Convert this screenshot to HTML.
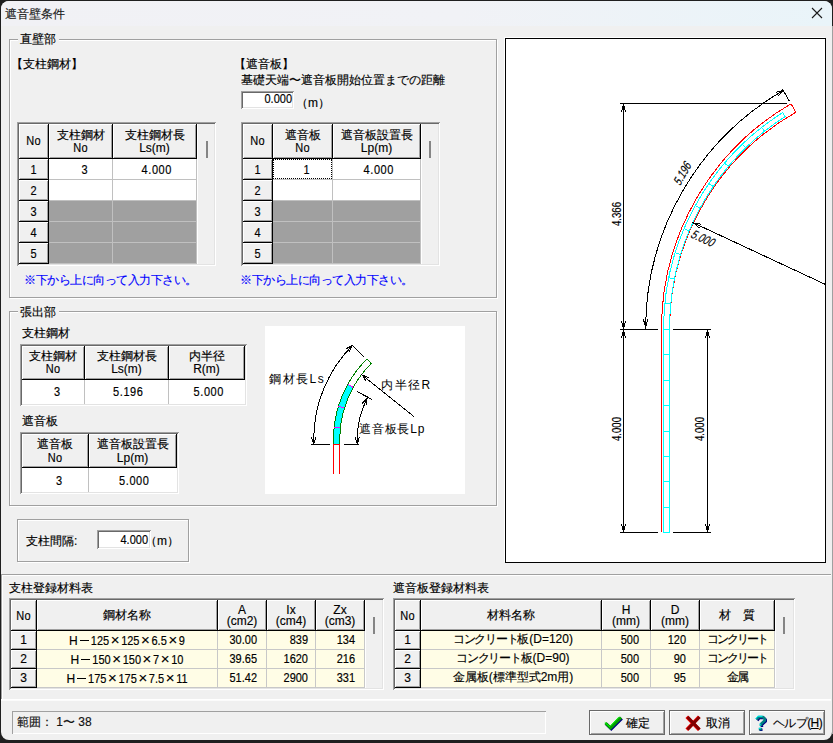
<!DOCTYPE html>
<html><head><meta charset="utf-8"><style>
html,body{margin:0;padding:0}
body{width:833px;height:743px;overflow:hidden;background:#1f1f1f;position:relative;font-family:"Liberation Sans",sans-serif;font-size:12px;line-height:12px;color:#000;-webkit-text-stroke:0.15px currentColor}
.a{position:absolute;box-sizing:content-box}
.t{white-space:nowrap}
.n{display:inline-block;font-size:11px;transform:scaleY(1.16);transform-origin:0 88%}
.x{display:inline-block;width:12px;text-align:center;font-size:15px;line-height:12px;vertical-align:baseline;position:relative;top:0px}
.m{letter-spacing:0.57px;text-indent:0.57px}
.dash{display:inline-block;width:13px;height:12px;position:relative;vertical-align:top}
.dash:after{content:'';position:absolute;left:2px;top:6px;width:9px;height:1px;background:#000}
.hc{background:#f0f0f0;border-right:1px solid #000;border-bottom:1px solid #000;box-shadow:inset 1px 1px 0 #fff, inset -1px -1px 0 #a0a0a0}
</style></head><body>
<div class="a" style="left:1px;top:1px;width:831px;height:739px;border-radius:8px;background:#f0f0f0;overflow:hidden">
<div class="a" style="left:0;top:0;width:831px;height:25px;background:linear-gradient(to right,#f1f1f5 0%,#f1f2f6 55%,#e9f4f9 100%)"></div>
</div>
<div class="a t" style="left:5px;top:8px;color:#1a1a1a">遮音壁条件</div>
<svg class="a" style="left:810px;top:6px" width="14" height="14"><path d="M2 2 L12 12 M12 2 L2 12" stroke="#1a1a1a" stroke-width="1.1"/></svg>
<div class="a" style="left:10px;top:40px;width:486px;height:257px;border:1px solid #fff"></div>
<div class="a" style="left:9px;top:39px;width:486px;height:257px;border:1px solid #a0a0a0"></div>
<div class="a" style="left:18px;top:32px;width:41px;height:14px;background:#f0f0f0"></div>
<div class="a t" style="left:20px;top:33px;">直壁部</div>
<div class="a t" style="left:11px;top:58px;">【支柱鋼材】</div>
<div class="a t" style="left:234px;top:58px;">【遮音板】</div>
<div class="a t" style="left:241px;top:74px;">基礎天端〜遮音板開始位置までの距離</div>
<div class="a" style="left:241px;top:91px;width:53px;height:18px;background:#fff;box-shadow:inset 1px 1px 0 #a0a0a0, inset -1px -1px 0 #fff, inset 2px 2px 0 #696969, inset -2px -2px 0 #e3e3e3"></div>
<div class="a t" style="left:-8px;top:93px;width:300px;text-align:right;"><span class="n">0.000</span></div>
<div class="a t" style="left:296px;top:97px;">（m）</div>
<div class="a" style="left:17px;top:122px;width:199px;height:144px;background:#f0f0f0;box-shadow:inset 1px 1px 0 #a0a0a0, inset -1px -1px 0 #fff, inset 2px 2px 0 #696969, inset -2px -2px 0 #e3e3e3"></div>
<div class="a hc" style="left:19px;top:124px;width:29px;height:34px"></div>
<div class="a hc" style="left:49px;top:124px;width:63px;height:34px"></div>
<div class="a hc" style="left:113px;top:124px;width:83px;height:34px"></div>
<div class="a hc" style="left:19px;top:159px;width:29px;height:20px"></div>
<div class="a" style="left:49px;top:159px;width:63px;height:20px;background:#fff;border-right:1px solid #c0c0c0;border-bottom:1px solid #c0c0c0"></div>
<div class="a" style="left:113px;top:159px;width:83px;height:20px;background:#fff;border-right:1px solid #c0c0c0;border-bottom:1px solid #c0c0c0"></div>
<div class="a hc" style="left:19px;top:180px;width:29px;height:20px"></div>
<div class="a" style="left:49px;top:180px;width:63px;height:20px;background:#fff;border-right:1px solid #c0c0c0;border-bottom:1px solid #c0c0c0"></div>
<div class="a" style="left:113px;top:180px;width:83px;height:20px;background:#fff;border-right:1px solid #c0c0c0;border-bottom:1px solid #c0c0c0"></div>
<div class="a hc" style="left:19px;top:201px;width:29px;height:20px"></div>
<div class="a" style="left:49px;top:201px;width:63px;height:20px;background:#a0a0a0;border-right:1px solid #c0c0c0;border-bottom:1px solid #c0c0c0"></div>
<div class="a" style="left:113px;top:201px;width:83px;height:20px;background:#a0a0a0;border-right:1px solid #c0c0c0;border-bottom:1px solid #c0c0c0"></div>
<div class="a hc" style="left:19px;top:222px;width:29px;height:20px"></div>
<div class="a" style="left:49px;top:222px;width:63px;height:20px;background:#a0a0a0;border-right:1px solid #c0c0c0;border-bottom:1px solid #c0c0c0"></div>
<div class="a" style="left:113px;top:222px;width:83px;height:20px;background:#a0a0a0;border-right:1px solid #c0c0c0;border-bottom:1px solid #c0c0c0"></div>
<div class="a hc" style="left:19px;top:243px;width:29px;height:20px"></div>
<div class="a" style="left:49px;top:243px;width:63px;height:20px;background:#a0a0a0;border-right:1px solid #c0c0c0;border-bottom:1px solid #c0c0c0"></div>
<div class="a" style="left:113px;top:243px;width:83px;height:20px;background:#a0a0a0;border-right:1px solid #c0c0c0;border-bottom:1px solid #c0c0c0"></div>
<div class="a" style="left:197px;top:124px;width:17px;height:140px;background:#f0f0f0;border-left:1px solid #fff;box-sizing:border-box"></div>
<div class="a" style="left:206px;top:141px;width:2px;height:17px;background:#858585"></div>
<div class="a" style="left:241px;top:122px;width:199px;height:144px;background:#f0f0f0;box-shadow:inset 1px 1px 0 #a0a0a0, inset -1px -1px 0 #fff, inset 2px 2px 0 #696969, inset -2px -2px 0 #e3e3e3"></div>
<div class="a hc" style="left:243px;top:124px;width:29px;height:34px"></div>
<div class="a hc" style="left:273px;top:124px;width:59px;height:34px"></div>
<div class="a hc" style="left:333px;top:124px;width:87px;height:34px"></div>
<div class="a hc" style="left:243px;top:159px;width:29px;height:20px"></div>
<div class="a" style="left:273px;top:159px;width:59px;height:20px;background:#fff;border-right:1px solid #c0c0c0;border-bottom:1px solid #c0c0c0"></div>
<div class="a" style="left:333px;top:159px;width:87px;height:20px;background:#fff;border-right:1px solid #c0c0c0;border-bottom:1px solid #c0c0c0"></div>
<div class="a hc" style="left:243px;top:180px;width:29px;height:20px"></div>
<div class="a" style="left:273px;top:180px;width:59px;height:20px;background:#fff;border-right:1px solid #c0c0c0;border-bottom:1px solid #c0c0c0"></div>
<div class="a" style="left:333px;top:180px;width:87px;height:20px;background:#fff;border-right:1px solid #c0c0c0;border-bottom:1px solid #c0c0c0"></div>
<div class="a hc" style="left:243px;top:201px;width:29px;height:20px"></div>
<div class="a" style="left:273px;top:201px;width:59px;height:20px;background:#a0a0a0;border-right:1px solid #c0c0c0;border-bottom:1px solid #c0c0c0"></div>
<div class="a" style="left:333px;top:201px;width:87px;height:20px;background:#a0a0a0;border-right:1px solid #c0c0c0;border-bottom:1px solid #c0c0c0"></div>
<div class="a hc" style="left:243px;top:222px;width:29px;height:20px"></div>
<div class="a" style="left:273px;top:222px;width:59px;height:20px;background:#a0a0a0;border-right:1px solid #c0c0c0;border-bottom:1px solid #c0c0c0"></div>
<div class="a" style="left:333px;top:222px;width:87px;height:20px;background:#a0a0a0;border-right:1px solid #c0c0c0;border-bottom:1px solid #c0c0c0"></div>
<div class="a hc" style="left:243px;top:243px;width:29px;height:20px"></div>
<div class="a" style="left:273px;top:243px;width:59px;height:20px;background:#a0a0a0;border-right:1px solid #c0c0c0;border-bottom:1px solid #c0c0c0"></div>
<div class="a" style="left:333px;top:243px;width:87px;height:20px;background:#a0a0a0;border-right:1px solid #c0c0c0;border-bottom:1px solid #c0c0c0"></div>
<div class="a" style="left:421px;top:124px;width:17px;height:140px;background:#f0f0f0;border-left:1px solid #fff;box-sizing:border-box"></div>
<div class="a" style="left:429px;top:141px;width:2px;height:17px;background:#858585"></div>
<div class="a t" style="left:19px;top:135px;width:29px;text-align:center;"><span class="n" style="letter-spacing:0.3px">No</span></div>
<div class="a t" style="left:49px;top:129px;width:63px;text-align:center;">支柱鋼材</div>
<div class="a t" style="left:49px;top:142px;width:63px;text-align:center;"><span class="n" style="letter-spacing:0.3px">No</span></div>
<div class="a t" style="left:113px;top:129px;width:83px;text-align:center;">支柱鋼材長</div>
<div class="a t" style="left:113px;top:142px;width:83px;text-align:center;">Ls(m)</div>
<div class="a t" style="left:19px;top:164px;width:29px;text-align:center;"><span class="n m">1</span></div>
<div class="a t" style="left:19px;top:185px;width:29px;text-align:center;"><span class="n m">2</span></div>
<div class="a t" style="left:19px;top:206px;width:29px;text-align:center;"><span class="n m">3</span></div>
<div class="a t" style="left:19px;top:227px;width:29px;text-align:center;"><span class="n m">4</span></div>
<div class="a t" style="left:19px;top:248px;width:29px;text-align:center;"><span class="n m">5</span></div>
<div class="a t" style="left:49px;top:164px;width:71px;text-align:center;"><span class="n m">3</span></div>
<div class="a t" style="left:113px;top:164px;width:87px;text-align:center;"><span class="n m">4.000</span></div>
<div class="a t" style="left:243px;top:135px;width:29px;text-align:center;"><span class="n" style="letter-spacing:0.3px">No</span></div>
<div class="a t" style="left:273px;top:129px;width:59px;text-align:center;">遮音板</div>
<div class="a t" style="left:273px;top:142px;width:59px;text-align:center;"><span class="n" style="letter-spacing:0.3px">No</span></div>
<div class="a t" style="left:333px;top:129px;width:87px;text-align:center;">遮音板設置長</div>
<div class="a t" style="left:333px;top:142px;width:87px;text-align:center;">Lp(m)</div>
<div class="a t" style="left:243px;top:164px;width:29px;text-align:center;"><span class="n m">1</span></div>
<div class="a t" style="left:243px;top:185px;width:29px;text-align:center;"><span class="n m">2</span></div>
<div class="a t" style="left:243px;top:206px;width:29px;text-align:center;"><span class="n m">3</span></div>
<div class="a t" style="left:243px;top:227px;width:29px;text-align:center;"><span class="n m">4</span></div>
<div class="a t" style="left:243px;top:248px;width:29px;text-align:center;"><span class="n m">5</span></div>
<div class="a t" style="left:273px;top:164px;width:67px;text-align:center;"><span class="n m">1</span></div>
<div class="a t" style="left:333px;top:164px;width:91px;text-align:center;"><span class="n m">4.000</span></div>
<div class="a" style="left:273px;top:159px;width:57px;height:18px;border:1px dotted #000"></div>
<div class="a t" style="left:24px;top:274px;color:#0000ff;letter-spacing:-0.5px">※下から上に向って入力下さい。</div>
<div class="a t" style="left:240px;top:274px;color:#0000ff;letter-spacing:-0.5px">※下から上に向って入力下さい。</div>
<div class="a" style="left:10px;top:312px;width:486px;height:193px;border:1px solid #fff"></div>
<div class="a" style="left:9px;top:311px;width:486px;height:193px;border:1px solid #a0a0a0"></div>
<div class="a" style="left:18px;top:304px;width:41px;height:14px;background:#f0f0f0"></div>
<div class="a t" style="left:20px;top:306px;">張出部</div>
<div class="a t" style="left:22px;top:327px;">支柱鋼材</div>
<div class="a" style="left:20px;top:344px;width:227px;height:62px;background:#f0f0f0;box-shadow:inset 1px 1px 0 #a0a0a0, inset -1px -1px 0 #fff, inset 2px 2px 0 #696969, inset -2px -2px 0 #e3e3e3"></div>
<div class="a hc" style="left:22px;top:346px;width:62px;height:33px"></div>
<div class="a hc" style="left:85px;top:346px;width:83px;height:33px"></div>
<div class="a hc" style="left:169px;top:346px;width:75px;height:33px"></div>
<div class="a" style="left:22px;top:380px;width:62px;height:24px;background:#fff;border-right:1px solid #c0c0c0;"></div>
<div class="a" style="left:85px;top:380px;width:83px;height:24px;background:#fff;border-right:1px solid #c0c0c0;"></div>
<div class="a" style="left:169px;top:380px;width:76px;height:24px;background:#fff;"></div>
<div class="a t" style="left:22px;top:350px;width:62px;text-align:center;">支柱鋼材</div>
<div class="a t" style="left:22px;top:363px;width:62px;text-align:center;"><span class="n" style="letter-spacing:0.3px">No</span></div>
<div class="a t" style="left:85px;top:350px;width:83px;text-align:center;">支柱鋼材長</div>
<div class="a t" style="left:85px;top:363px;width:83px;text-align:center;">Ls(m)</div>
<div class="a t" style="left:169px;top:350px;width:75px;text-align:center;">内半径</div>
<div class="a t" style="left:169px;top:363px;width:75px;text-align:center;">R(m)</div>
<div class="a t" style="left:22px;top:386px;width:70px;text-align:center;"><span class="n m">3</span></div>
<div class="a t" style="left:85px;top:386px;width:86px;text-align:center;"><span class="n m">5.196</span></div>
<div class="a t" style="left:169px;top:386px;width:79px;text-align:center;"><span class="n m">5.000</span></div>
<div class="a t" style="left:22px;top:415px;">遮音板</div>
<div class="a" style="left:20px;top:432px;width:159px;height:62px;background:#f0f0f0;box-shadow:inset 1px 1px 0 #a0a0a0, inset -1px -1px 0 #fff, inset 2px 2px 0 #696969, inset -2px -2px 0 #e3e3e3"></div>
<div class="a hc" style="left:22px;top:434px;width:66px;height:33px"></div>
<div class="a hc" style="left:89px;top:434px;width:87px;height:33px"></div>
<div class="a" style="left:22px;top:468px;width:66px;height:24px;background:#fff;border-right:1px solid #c0c0c0;"></div>
<div class="a" style="left:89px;top:468px;width:88px;height:24px;background:#fff;"></div>
<div class="a t" style="left:22px;top:438px;width:66px;text-align:center;">遮音板</div>
<div class="a t" style="left:22px;top:452px;width:66px;text-align:center;"><span class="n" style="letter-spacing:0.3px">No</span></div>
<div class="a t" style="left:89px;top:438px;width:87px;text-align:center;">遮音板設置長</div>
<div class="a t" style="left:89px;top:452px;width:87px;text-align:center;">Lp(m)</div>
<div class="a t" style="left:22px;top:475px;width:74px;text-align:center;"><span class="n m">3</span></div>
<div class="a t" style="left:89px;top:475px;width:90px;text-align:center;"><span class="n m">5.000</span></div>
<div class="a" style="left:265px;top:326px;width:200px;height:168px;background:#fff"></div>
<svg class="a" style="left:265px;top:326px" width="200" height="168" viewBox="265 326 200 168" shape-rendering="crispEdges"><path d="M333.5 444 L333.50 439.60 A114 114 0 0 1 347.79 384.33 L353.22 387.34 A107.8 107.8 0 0 0 339.70 439.60 L339.4 444 Z" fill="#00ffff" stroke="#008000" stroke-width="1"/><path d="M347.79 384.33 A114 114 0 0 1 367.03 358.85 L371.41 363.24 A107.8 107.8 0 0 0 353.22 387.34" fill="none" stroke="#008000" stroke-width="1"/><path d="M334.19 427.09 L340.35 427.77" stroke="#ff00ff" stroke-width="1" fill="none" /><path d="M338.48 406.27 L344.41 408.08" stroke="#ff00ff" stroke-width="1" fill="none" /><path d="M347.79 384.33 L353.22 387.34" stroke="#ff00ff" stroke-width="1" fill="none" /><path d="M333.5 444 L333.5 474 M339.5 444 L339.5 474 M333.5 444.5 L339.5 444.5" stroke="#ff0000" stroke-width="1" fill="none"/><path d="M311 444.5 L330 444.5 M344 444.5 L359 444.5" stroke="#000" stroke-width="1" fill="none"/><path d="M313.70 444 L313.70 439.60 A133.8 133.8 0 0 1 352.40 345.49" stroke="#000" stroke-width="1" fill="none"/><path d="M311.54 437.34 L313.70 444.00 L315.86 437.34" stroke="#000" stroke-width="1" fill="none"/><path d="M349.25 351.74 L352.40 345.49 L346.17 348.70" stroke="#000" stroke-width="1" fill="none"/><path d="M352.40 345.49 L364.34 357.30" stroke="#000" stroke-width="1" fill="none" /><path d="M357.20 444 L357.20 439.60 A90.3 90.3 0 0 1 367.11 398.46" stroke="#000" stroke-width="1" fill="none"/><path d="M355.04 437.34 L357.20 444.00 L359.36 437.34" stroke="#000" stroke-width="1" fill="none"/><path d="M366.01 405.38 L367.11 398.46 L362.16 403.41" stroke="#000" stroke-width="1" fill="none"/><path d="M356.82 391.39 L371.92 399.41" stroke="#000" stroke-width="1" fill="none" /><path d="M362.20 375.10 L414.00 416.60" stroke="#000" stroke-width="1" fill="none" /><path d="M368.75 377.57 L362.20 375.10 L366.04 380.95" stroke="#000" stroke-width="1" fill="none"/><text font-family="Liberation Sans, sans-serif" font-size="12" fill="#000" x="269" y="383" letter-spacing="1.5">鋼材長Ls</text><text font-family="Liberation Sans, sans-serif" font-size="12" fill="#000" x="381" y="389" letter-spacing="1.5">内半径R</text><text font-family="Liberation Sans, sans-serif" font-size="12" fill="#000" x="359" y="433" letter-spacing="0.8">遮音板長Lp</text></svg>
<div class="a" style="left:18px;top:520px;width:170px;height:41px;border:1px solid #fff"></div>
<div class="a" style="left:17px;top:519px;width:170px;height:41px;border:1px solid #a0a0a0"></div>
<div class="a t" style="left:26px;top:535px;">支柱間隔:</div>
<div class="a" style="left:97px;top:530px;width:54px;height:19px;background:#fff;box-shadow:inset 1px 1px 0 #a0a0a0, inset -1px -1px 0 #fff, inset 2px 2px 0 #696969, inset -2px -2px 0 #e3e3e3"></div>
<div class="a t" style="left:-152px;top:534px;width:300px;text-align:right;"><span class="n">4.000</span></div>
<div class="a t" style="left:145px;top:535px;">（m）</div>
<div class="a" style="left:505px;top:38px;width:319px;height:523px;border:1px solid #000;background:#fff;box-shadow:-1px -1px 0 #fff"></div>
<svg class="a" style="left:506px;top:39px" width="319" height="523" viewBox="506 39 319 523" shape-rendering="crispEdges"><path d="M661.5 532 L661.5 329 A260 260 0 0 1 791.00 103.83 L795.85 112.23 A250.3 250.3 0 0 0 669.5 329 L669.5 532" stroke="#ff0000" stroke-width="1" fill="none"/><path d="M663.5 532.5 L663.5 329 A256.8 256.8 0 0 1 782.64 112.66 L785.12 116.53 A252.2 252.2 0 0 0 669.5 329 L669.5 532.5 Z" stroke="#00ffff" stroke-width="1" fill="none"/><path d="M664.20 329.00 L668.80 329.00 M665.49 303.32 L670.06 303.78 M669.34 277.89 L673.85 278.81 M675.71 252.98 L680.10 254.34 M684.54 228.83 L688.78 230.62 M695.75 205.68 L699.78 207.89 M709.21 183.77 L713.01 186.37 M724.80 163.31 L728.31 166.28 M742.35 144.52 L745.55 147.83 M761.70 127.58 L764.55 131.19 M663.5 329.50 L669.5 329.50 M663.5 354.88 L669.5 354.88 M663.5 380.25 L669.5 380.25 M663.5 405.62 L669.5 405.62 M663.5 431.00 L669.5 431.00 M663.5 456.38 L669.5 456.38 M663.5 481.75 L669.5 481.75 M663.5 507.12 L669.5 507.12" stroke="#00ffff" stroke-width="1" fill="none"/><path d="M620 103.5 L787 103.5 M623.5 103 L623.5 532 M620 329.5 L658 329.5 M673 329.5 L711 329.5 M620 532.5 L658 532.5 M673 532.5 L711 532.5 M707.5 329 L707.5 532" stroke="#000" stroke-width="1" fill="none"/><path d="M625.44 111.76 L623.50 104.00 L621.56 111.76" stroke="#000" stroke-width="1" fill="none"/><path d="M621.56 321.24 L623.50 329.00 L625.44 321.24" stroke="#000" stroke-width="1" fill="none"/><path d="M625.44 337.76 L623.50 330.00 L621.56 337.76" stroke="#000" stroke-width="1" fill="none"/><path d="M621.56 524.24 L623.50 532.00 L625.44 524.24" stroke="#000" stroke-width="1" fill="none"/><path d="M709.44 337.76 L707.50 330.00 L705.56 337.76" stroke="#000" stroke-width="1" fill="none"/><path d="M705.56 524.24 L707.50 532.00 L709.44 524.24" stroke="#000" stroke-width="1" fill="none"/><path d="M645.61 327.08 A275.4 275.4 0 0 1 783.30 90.50" stroke="#000" stroke-width="1" fill="none"/><path d="M782.30 88.76 L789.50 101.24" stroke="#000" stroke-width="1" fill="none" /><path d="M777.74 96.25 L783.30 90.50 L775.54 92.43" stroke="#000" stroke-width="1" fill="none"/><path d="M643.40 319.39 L645.61 327.08 L647.81 319.39" stroke="#000" stroke-width="1" fill="none"/><path d="M693.52 222.92 L826.00 284.70" stroke="#000" stroke-width="1" fill="none" /><path d="M701.42 224.17 L693.52 222.92 L699.55 228.17" stroke="#000" stroke-width="1" fill="none"/><text font-family="Liberation Sans, sans-serif" font-size="12.5" fill="#000" text-anchor="middle" dominant-baseline="central" stroke="#000" stroke-width="0.15" transform="translate(617 214) rotate(-90) skewX(0) scale(0.77 1)" x="0" y="0">4.366</text><text font-family="Liberation Sans, sans-serif" font-size="12.5" fill="#000" text-anchor="middle" dominant-baseline="central" stroke="#000" stroke-width="0.15" transform="translate(617 429) rotate(-90) skewX(0) scale(0.77 1)" x="0" y="0">4.000</text><text font-family="Liberation Sans, sans-serif" font-size="12.5" fill="#000" text-anchor="middle" dominant-baseline="central" stroke="#000" stroke-width="0.15" transform="translate(700 429) rotate(-90) skewX(0) scale(0.77 1)" x="0" y="0">4.000</text><text font-family="Liberation Sans, sans-serif" font-size="12.5" fill="#000" text-anchor="middle" dominant-baseline="central" stroke="#000" stroke-width="0.15" transform="translate(682.5 173) rotate(-61) skewX(-14) scale(0.77 1)" x="0" y="0">5.196</text><text font-family="Liberation Sans, sans-serif" font-size="12.5" fill="#000" text-anchor="middle" dominant-baseline="central" stroke="#000" stroke-width="0.15" transform="translate(703.5 238.5) rotate(25) skewX(-14) scale(0.77 1)" x="0" y="0">5.000</text></svg>
<div class="a" style="left:1px;top:574px;width:830px;height:1px;background:#a0a0a0"></div>
<div class="a" style="left:2px;top:575px;width:829px;height:1px;background:#fff"></div>
<div class="a" style="left:1px;top:575px;width:1px;height:124px;background:#a0a0a0"></div>
<div class="a" style="left:2px;top:576px;width:1px;height:123px;background:#fff"></div>
<div class="a t" style="left:9px;top:582px;">支柱登録材料表</div>
<div class="a t" style="left:393px;top:582px;">遮音板登録材料表</div>
<div class="a" style="left:9px;top:598px;width:375px;height:92px;background:#f0f0f0;box-shadow:inset 1px 1px 0 #a0a0a0, inset -1px -1px 0 #fff, inset 2px 2px 0 #696969, inset -2px -2px 0 #e3e3e3"></div>
<div class="a hc" style="left:11px;top:600px;width:25px;height:30px"></div>
<div class="a hc" style="left:37px;top:600px;width:180px;height:30px"></div>
<div class="a hc" style="left:218px;top:600px;width:48px;height:30px"></div>
<div class="a hc" style="left:267px;top:600px;width:48px;height:30px"></div>
<div class="a hc" style="left:316px;top:600px;width:48px;height:30px"></div>
<div class="a hc" style="left:11px;top:631px;width:25px;height:18px"></div>
<div class="a" style="left:37px;top:631px;width:180px;height:18px;background:#fffde6;border-right:1px solid #c8c8c8;border-bottom:1px solid #c8c8c8"></div>
<div class="a" style="left:218px;top:631px;width:48px;height:18px;background:#fffde6;border-right:1px solid #c8c8c8;border-bottom:1px solid #c8c8c8"></div>
<div class="a" style="left:267px;top:631px;width:48px;height:18px;background:#fffde6;border-right:1px solid #c8c8c8;border-bottom:1px solid #c8c8c8"></div>
<div class="a" style="left:316px;top:631px;width:48px;height:18px;background:#fffde6;border-right:1px solid #c8c8c8;border-bottom:1px solid #c8c8c8"></div>
<div class="a hc" style="left:11px;top:650px;width:25px;height:18px"></div>
<div class="a" style="left:37px;top:650px;width:180px;height:18px;background:#fffde6;border-right:1px solid #c8c8c8;border-bottom:1px solid #c8c8c8"></div>
<div class="a" style="left:218px;top:650px;width:48px;height:18px;background:#fffde6;border-right:1px solid #c8c8c8;border-bottom:1px solid #c8c8c8"></div>
<div class="a" style="left:267px;top:650px;width:48px;height:18px;background:#fffde6;border-right:1px solid #c8c8c8;border-bottom:1px solid #c8c8c8"></div>
<div class="a" style="left:316px;top:650px;width:48px;height:18px;background:#fffde6;border-right:1px solid #c8c8c8;border-bottom:1px solid #c8c8c8"></div>
<div class="a hc" style="left:11px;top:669px;width:25px;height:18px"></div>
<div class="a" style="left:37px;top:669px;width:180px;height:18px;background:#fffde6;border-right:1px solid #c8c8c8;border-bottom:1px solid #c8c8c8"></div>
<div class="a" style="left:218px;top:669px;width:48px;height:18px;background:#fffde6;border-right:1px solid #c8c8c8;border-bottom:1px solid #c8c8c8"></div>
<div class="a" style="left:267px;top:669px;width:48px;height:18px;background:#fffde6;border-right:1px solid #c8c8c8;border-bottom:1px solid #c8c8c8"></div>
<div class="a" style="left:316px;top:669px;width:48px;height:18px;background:#fffde6;border-right:1px solid #c8c8c8;border-bottom:1px solid #c8c8c8"></div>
<div class="a" style="left:365px;top:600px;width:17px;height:88px;background:#f0f0f0;border-left:1px solid #fff;box-sizing:border-box"></div>
<div class="a" style="left:373px;top:617px;width:2px;height:17px;background:#858585"></div>
<div class="a t" style="left:11px;top:610px;width:25px;text-align:center;"><span class="n" style="letter-spacing:0.3px">No</span></div>
<div class="a t" style="left:37px;top:609px;width:180px;text-align:center;">鋼材名称</div>
<div class="a t" style="left:218px;top:604px;width:48px;text-align:center;">A</div>
<div class="a t" style="left:218px;top:615px;width:48px;text-align:center;">(cm2)</div>
<div class="a t" style="left:267px;top:604px;width:48px;text-align:center;">Ix</div>
<div class="a t" style="left:267px;top:615px;width:48px;text-align:center;">(cm4)</div>
<div class="a t" style="left:316px;top:604px;width:48px;text-align:center;">Zx</div>
<div class="a t" style="left:316px;top:615px;width:48px;text-align:center;">(cm3)</div>
<div class="a t" style="left:11px;top:634px;width:25px;text-align:center;">1</div>
<div class="a t" style="left:37px;top:634px;width:180px;text-align:center;">H<span class="dash"></span><span class="n">125</span><span class="x">×</span><span class="n">125</span><span class="x">×</span><span class="n">6.5</span><span class="x">×</span><span class="n">9</span></div>
<div class="a t" style="left:-43px;top:634px;width:300px;text-align:right;"><span class="n">30.00</span></div>
<div class="a t" style="left:8px;top:634px;width:300px;text-align:right;"><span class="n">839</span></div>
<div class="a t" style="left:55px;top:634px;width:300px;text-align:right;"><span class="n">134</span></div>
<div class="a t" style="left:11px;top:653px;width:25px;text-align:center;">2</div>
<div class="a t" style="left:37px;top:653px;width:180px;text-align:center;">H<span class="dash"></span><span class="n">150</span><span class="x">×</span><span class="n">150</span><span class="x">×</span><span class="n">7</span><span class="x">×</span><span class="n">10</span></div>
<div class="a t" style="left:-43px;top:653px;width:300px;text-align:right;"><span class="n">39.65</span></div>
<div class="a t" style="left:8px;top:653px;width:300px;text-align:right;"><span class="n">1620</span></div>
<div class="a t" style="left:55px;top:653px;width:300px;text-align:right;"><span class="n">216</span></div>
<div class="a t" style="left:11px;top:672px;width:25px;text-align:center;">3</div>
<div class="a t" style="left:37px;top:672px;width:180px;text-align:center;">H<span class="dash"></span><span class="n">175</span><span class="x">×</span><span class="n">175</span><span class="x">×</span><span class="n">7.5</span><span class="x">×</span><span class="n">11</span></div>
<div class="a t" style="left:-43px;top:672px;width:300px;text-align:right;"><span class="n">51.42</span></div>
<div class="a t" style="left:8px;top:672px;width:300px;text-align:right;"><span class="n">2900</span></div>
<div class="a t" style="left:55px;top:672px;width:300px;text-align:right;"><span class="n">331</span></div>
<div class="a" style="left:393px;top:598px;width:402px;height:92px;background:#f0f0f0;box-shadow:inset 1px 1px 0 #a0a0a0, inset -1px -1px 0 #fff, inset 2px 2px 0 #696969, inset -2px -2px 0 #e3e3e3"></div>
<div class="a hc" style="left:395px;top:600px;width:25px;height:30px"></div>
<div class="a hc" style="left:421px;top:600px;width:180px;height:30px"></div>
<div class="a hc" style="left:602px;top:600px;width:48px;height:30px"></div>
<div class="a hc" style="left:651px;top:600px;width:48px;height:30px"></div>
<div class="a hc" style="left:700px;top:600px;width:74px;height:30px"></div>
<div class="a hc" style="left:395px;top:631px;width:25px;height:18px"></div>
<div class="a" style="left:421px;top:631px;width:180px;height:18px;background:#fffde6;border-right:1px solid #c8c8c8;border-bottom:1px solid #c8c8c8"></div>
<div class="a" style="left:602px;top:631px;width:48px;height:18px;background:#fffde6;border-right:1px solid #c8c8c8;border-bottom:1px solid #c8c8c8"></div>
<div class="a" style="left:651px;top:631px;width:48px;height:18px;background:#fffde6;border-right:1px solid #c8c8c8;border-bottom:1px solid #c8c8c8"></div>
<div class="a" style="left:700px;top:631px;width:74px;height:18px;background:#fffde6;border-right:1px solid #c8c8c8;border-bottom:1px solid #c8c8c8"></div>
<div class="a hc" style="left:395px;top:650px;width:25px;height:18px"></div>
<div class="a" style="left:421px;top:650px;width:180px;height:18px;background:#fffde6;border-right:1px solid #c8c8c8;border-bottom:1px solid #c8c8c8"></div>
<div class="a" style="left:602px;top:650px;width:48px;height:18px;background:#fffde6;border-right:1px solid #c8c8c8;border-bottom:1px solid #c8c8c8"></div>
<div class="a" style="left:651px;top:650px;width:48px;height:18px;background:#fffde6;border-right:1px solid #c8c8c8;border-bottom:1px solid #c8c8c8"></div>
<div class="a" style="left:700px;top:650px;width:74px;height:18px;background:#fffde6;border-right:1px solid #c8c8c8;border-bottom:1px solid #c8c8c8"></div>
<div class="a hc" style="left:395px;top:669px;width:25px;height:18px"></div>
<div class="a" style="left:421px;top:669px;width:180px;height:18px;background:#fffde6;border-right:1px solid #c8c8c8;border-bottom:1px solid #c8c8c8"></div>
<div class="a" style="left:602px;top:669px;width:48px;height:18px;background:#fffde6;border-right:1px solid #c8c8c8;border-bottom:1px solid #c8c8c8"></div>
<div class="a" style="left:651px;top:669px;width:48px;height:18px;background:#fffde6;border-right:1px solid #c8c8c8;border-bottom:1px solid #c8c8c8"></div>
<div class="a" style="left:700px;top:669px;width:74px;height:18px;background:#fffde6;border-right:1px solid #c8c8c8;border-bottom:1px solid #c8c8c8"></div>
<div class="a" style="left:775px;top:600px;width:18px;height:88px;background:#f0f0f0;border-left:1px solid #fff;box-sizing:border-box"></div>
<div class="a" style="left:783px;top:617px;width:2px;height:17px;background:#858585"></div>
<div class="a t" style="left:395px;top:610px;width:25px;text-align:center;"><span class="n" style="letter-spacing:0.3px">No</span></div>
<div class="a t" style="left:421px;top:609px;width:180px;text-align:center;">材料名称</div>
<div class="a t" style="left:602px;top:604px;width:48px;text-align:center;">H</div>
<div class="a t" style="left:602px;top:615px;width:48px;text-align:center;">(mm)</div>
<div class="a t" style="left:651px;top:604px;width:48px;text-align:center;">D</div>
<div class="a t" style="left:651px;top:615px;width:48px;text-align:center;">(mm)</div>
<div class="a t" style="left:700px;top:609px;width:74px;text-align:center;">材　質</div>
<div class="a t" style="left:395px;top:634px;width:25px;text-align:center;">1</div>
<div class="a t" style="left:421px;top:633px;width:184px;text-align:center;"><span style="letter-spacing:-1.3px">コンクリート</span>板(D=120)</div>
<div class="a t" style="left:339px;top:634px;width:300px;text-align:right;"><span class="n">500</span></div>
<div class="a t" style="left:386px;top:634px;width:300px;text-align:right;"><span class="n">120</span></div>
<div class="a t" style="left:700px;top:633px;width:74px;text-align:center;letter-spacing:-2px">コンクリート</div>
<div class="a t" style="left:395px;top:653px;width:25px;text-align:center;">2</div>
<div class="a t" style="left:421px;top:652px;width:184px;text-align:center;"><span style="letter-spacing:-1.3px">コンクリート</span>板(D=90)</div>
<div class="a t" style="left:339px;top:653px;width:300px;text-align:right;"><span class="n">500</span></div>
<div class="a t" style="left:386px;top:653px;width:300px;text-align:right;"><span class="n">90</span></div>
<div class="a t" style="left:700px;top:652px;width:74px;text-align:center;letter-spacing:-2px">コンクリート</div>
<div class="a t" style="left:395px;top:672px;width:25px;text-align:center;">3</div>
<div class="a t" style="left:421px;top:671px;width:184px;text-align:center;">金属板(標準型式2m用)</div>
<div class="a t" style="left:339px;top:672px;width:300px;text-align:right;"><span class="n">500</span></div>
<div class="a t" style="left:386px;top:672px;width:300px;text-align:right;"><span class="n">95</span></div>
<div class="a t" style="left:700px;top:671px;width:74px;text-align:center;letter-spacing:-2px">金属</div>
<div class="a" style="left:832px;top:26px;width:1px;height:708px;background:#a0a0a0"></div>
<div class="a" style="left:1px;top:699px;width:830px;height:1px;background:#fff"></div>
<div class="a" style="left:1px;top:700px;width:830px;height:1px;background:#fbfbfb"></div>
<div class="a" style="left:12px;top:711px;width:534px;height:23px;box-shadow:inset 1px 1px 0 #a0a0a0, inset -1px -1px 0 #fff"></div>
<div class="a t" style="left:17px;top:716px;color:#111">範囲：&nbsp;1〜 38</div>
<div class="a" style="left:589px;top:710px;width:76px;height:25px;background:#f0f0f0;box-sizing:border-box;border:1px solid #696969;box-shadow:inset 1px 1px 0 #fff, inset -1px -1px 0 #a0a0a0"></div>
<div class="a" style="left:669px;top:710px;width:76px;height:25px;background:#f0f0f0;box-sizing:border-box;border:1px solid #696969;box-shadow:inset 1px 1px 0 #fff, inset -1px -1px 0 #a0a0a0"></div>
<div class="a" style="left:749px;top:710px;width:76px;height:25px;background:#f0f0f0;box-sizing:border-box;border:1px solid #696969;box-shadow:inset 1px 1px 0 #fff, inset -1px -1px 0 #a0a0a0"></div>
<div class="a t" style="left:626px;top:717px;">確定</div>
<div class="a t" style="left:706px;top:717px;">取消</div>
<div class="a t" style="left:773px;top:717px;letter-spacing:-0.6px">ヘルプ(<u>H</u>)</div>
<svg class="a" style="left:600px;top:710px" width="26" height="24" viewBox="600 710 26 24"><g fill="none" stroke-linecap="square"><path d="M606.5 724 L610.5 728 L620 718.5" stroke="#000080" stroke-width="3" transform="translate(0.8,1)"/><path d="M606.5 724 L610.5 728 L620 718.5" stroke="#00a000" stroke-width="3"/><path d="M605.8 723.3 L610.3 727.3 M610.8 726.6 L619.3 717.8" stroke="#00ff00" stroke-width="1" transform="translate(-0.6,-0.6)"/></g></svg>
<svg class="a" style="left:684px;top:713px" width="20" height="20" viewBox="684 713 20 20"><g stroke-linecap="square" fill="none"><path d="M688.5 718 L698.5 728.5 M698.5 718 L688.5 728.5" stroke="#ff0000" stroke-width="3.6" transform="translate(-0.5,0)"/><path d="M688.5 718 L698.5 728.5 M698.5 718 L688.5 728.5" stroke="#800000" stroke-width="3"/></g></svg>
<svg class="a" style="left:752px;top:712px" width="18" height="22" viewBox="752 712 18 22"><g fill="none" stroke-linejoin="round"><path d="M756.5 719.5 L758.5 717 L763 717 L764.8 718.8 L764.8 720.5 L761 724 L761 726" stroke="#000080" stroke-width="2.6" transform="translate(0.9,0.9)"/><path d="M756.5 719.5 L758.5 717 L763 717 L764.8 718.8 L764.8 720.5 L761 724 L761 726" stroke="#008080" stroke-width="2.6"/><path d="M755.5 719 L757.8 716.2 L762.5 716.2 M760.1 723.6 L760.1 725.5" stroke="#00ffff" stroke-width="1"/></g><rect x="759.5" y="728.5" width="3" height="2.5" fill="#000080"/><rect x="758.8" y="727.8" width="3" height="2.5" fill="#008080"/><rect x="758.8" y="727.8" width="2" height="1" fill="#00ffff"/></svg>
</body></html>
